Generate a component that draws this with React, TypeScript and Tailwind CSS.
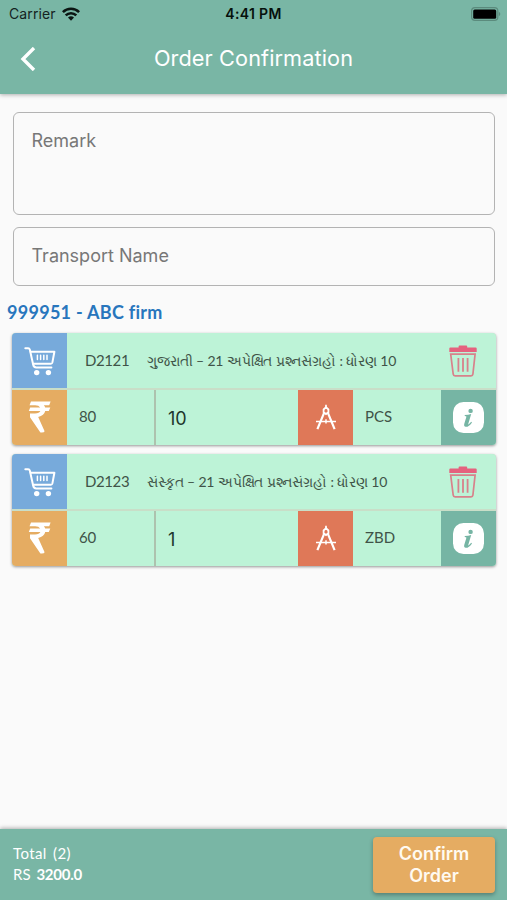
import React from 'react';

const ORDER_ITEMS = [
  {
    code: 'D2121',
    subject: 'ગુજરાતી',
    price: 80,
    quantity: 10,
    unit: 'PCS'
  },
  {
    code: 'D2123',
    subject: 'સંસ્કૃત',
    price: 60,
    quantity: 1,
    unit: 'ZBD'
  }
];

type OrderItem = (typeof ORDER_ITEMS)[number];

function WifiIcon() {
  return (
    <svg className="w-[18px] h-[14px]" viewBox="0 0 18 14" fill="none" stroke="#0b1512" strokeWidth="2.6">
      <path d="M0.9 5.1a11.6 11.6 0 0 1 16.2 0" />
      <path d="M3.7 8.4a7.6 7.6 0 0 1 10.6 0" />
      <path d="M6 10.6a4.4 4.4 0 0 1 6 0L9 13.7z" fill="#0b1512" stroke="none" />
    </svg>
  );
}

function BatteryIcon() {
  return (
    <svg className="w-[30px] h-[14px]" viewBox="0 0 30 14">
      <rect x="0.6" y="0.6" width="26.2" height="12.8" rx="3.4" fill="none" stroke="#5b8b7d" strokeWidth="1.2" />
      <rect x="2.2" y="2.4" width="23" height="9.4" rx="1.5" fill="#000" />
      <path d="M27.8 4.8c2 0.8 2 3.6 0 4.4z" fill="#5b8b7d" />
    </svg>
  );
}

function CartIcon() {
  return (
    <svg className="w-8 h-[30px]" viewBox="0 0 32 30" fill="none" stroke="#fff" strokeWidth="2" strokeLinecap="round" strokeLinejoin="round">
      <path d="M1.3 2.2H4.2Q5.4 2.2 5.8 3.5L9.2 18.8Q9.7 21.4 12.2 21.4H27.4" />
      <path d="M6.6 5.8H30.4L28.4 16.4Q28.1 17.7 26.9 17.7H9.3" />
      <path d="M13.4 9.2V13.6M16.6 9.2V13.6M19.8 9.2V13.6M23 9.2V13.6" strokeWidth="1.5" />
      <circle cx="12.7" cy="26.6" r="2.7" fill="#fff" stroke="none" />
      <circle cx="24.4" cy="26.6" r="2.7" fill="#fff" stroke="none" />
    </svg>
  );
}

function RupeeIcon() {
  return (
    <svg className="w-[23px] h-[32px]" viewBox="0 0 23 32" fill="#fff">
      <path d="M3 0.5H22.6L21.2 4.2H15.8Q16.8 5.2 17.2 6.4H22.3L20.8 10.1H17.2Q16.2 14.8 10.2 16L16.6 30.2Q16.2 31.8 12.4 31.4L2 16.2V12.4H6.6Q11.4 12.5 12.4 10.1H0.8L2.2 6.4H12.2Q10.8 4.2 7.2 4.2H1.5Z" />
    </svg>
  );
}

function CompassIcon() {
  return (
    <svg className="w-5 h-[27px]" viewBox="0 0 20 27" fill="none" stroke="#fff">
      <path d="M10 0.8V4" strokeWidth="1.7" />
      <path d="M10 3.2L12.4 5.5V8.2L10 10L7.6 8.2V5.5Z" strokeWidth="1.8" />
      <path d="M8.2 8.6L1.4 25.2M11.8 8.6L18.6 25.2" strokeWidth="2.2" />
      <path d="M0 17.5H20" strokeWidth="1.7" />
      <path d="M10 15.3V19.5" strokeWidth="1.5" />
    </svg>
  );
}

function TrashIcon() {
  return (
    <svg className="w-7 h-8" viewBox="0 0 28 32" fill="none">
      <path d="M0.3 6V3.6Q0.3 2.5 1.4 2.5H9.6V1.4Q9.6 0.5 10.5 0.5H17.3Q18.2 0.5 18.2 1.4V2.5H26.6Q27.7 2.5 27.7 3.6V7H0.3Z" fill="#e5627e" />
      <path d="M1.7 9.2H26.1L23.9 29.2Q23.7 30.9 22 30.9H6.1Q4.4 30.9 4.2 29.2Z" stroke="#d8818b" strokeWidth="1.7" />
      <path d="M9.4 13V26.8M14 13V26.8M18.6 13V26.8" stroke="#d8818b" strokeWidth="1.8" />
    </svg>
  );
}

function InfoIcon() {
  return (
    <svg className="w-[31px] h-[31px]" viewBox="0 0 31 31">
      <rect width="31" height="31" rx="10.5" fill="#fff" />
      <circle cx="17.6" cy="8.9" r="2.2" fill="#76b5a4" />
      <path d="M11.8 13.1Q15.2 13 18.2 12L15.1 22.4Q15.6 22.8 18.2 19.8L19 20.4Q15.8 25 12.7 24.8Q10.5 24.5 11.3 21.8L13.4 14.8Q13.5 14.1 11.7 14.1Z" fill="#76b5a4" />
    </svg>
  );
}

function OrderCard({ item }: { item: OrderItem }) {
  return (
    <article className="flex h-[111.5px] flex-col gap-[1.5px] overflow-hidden rounded bg-[#c9dec8] font-['Lato','Noto_Sans',sans-serif] text-[#405348] shadow-[0_1px_3px_rgba(0,0,0,0.4)]">
      <div className="flex h-[55px] bg-[#bdf3d7]">
        <div className="flex w-[55px] items-center justify-center bg-[#77aadb]">
          <CartIcon />
        </div>
        <div className="flex w-[80px] items-center pl-[18px] text-[15px] tracking-[-0.4px]">{item.code}</div>
        <div className="flex flex-1 items-center whitespace-nowrap text-[14px] tracking-[-0.13px]">
          {item.subject} – 21 અપેક્ષિત પ્રશ્નસંગ્રહો : ધોરણ 10
        </div>
        <button className="flex w-[67px] items-center justify-center">
          <TrashIcon />
        </button>
      </div>
      <div className="flex h-[55px] bg-[#bdf3d7]">
        <div className="flex w-[55px] items-center justify-center bg-[#e5ac62]">
          <RupeeIcon />
        </div>
        <div className="flex w-[89px] items-center border-r-2 border-[#adc2ae] pb-0.5 pl-3 text-[15px] tracking-[-0.3px]">{item.price}</div>
        <div className="flex w-[142px] items-center pl-3 pt-0.5 font-['Inter',sans-serif] text-[18px] text-[#20372b]">
          {item.quantity}
        </div>
        <div className="flex w-[55px] items-center justify-center bg-[#df7858]">
          <CompassIcon />
        </div>
        <div className="flex flex-1 items-center pb-0.5 pl-3 text-[15px]">{item.unit}</div>
        <button className="flex w-[55px] items-center justify-center bg-[#76b5a4]">
          <InfoIcon />
        </button>
      </div>
    </article>
  );
}

export default function App() {
  return (
    <div className="flex h-[900px] w-[507px] flex-col overflow-hidden bg-[#fafafa] font-['Inter',sans-serif]">
      <header className="z-10 h-[94px] shrink-0 bg-[#79b6a5] shadow-[0_1px_4px_rgba(0,0,0,0.3)]">
        <div className="grid h-[27px] grid-cols-3 items-center pl-[6px] pr-[6px] text-[14px] text-[#14231f]">
          <div className="flex items-center gap-1.5 pl-[3px]">
            <span className="tracking-[0.1px]">Carrier</span>
            <WifiIcon />
          </div>
          <div className="text-center text-[14px] font-semibold tracking-[0.35px] text-[#06100c]">4:41 PM</div>
          <div className="flex justify-end">
            <BatteryIcon />
          </div>
        </div>
        <div className="grid h-[64px] grid-cols-[60px_1fr_60px] items-center text-white">
          <button className="pl-5">
            <svg className="h-6 w-4" viewBox="0 0 16 24" fill="none" stroke="currentColor" strokeWidth="3.4">
              <path d="M14 1L3 12L14 23" />
            </svg>
          </button>
          <h1 className="pb-0.5 text-center text-[21.7px] tracking-[0.1px]">Order Confirmation</h1>
        </div>
      </header>

      <main className="flex-1 pl-3 pr-[11px] pt-[18px]">
        <div className="mx-px h-[103px] rounded-md border-[1.5px] border-[#b3b3b3] px-[17.5px] pt-[15px] text-[18px] leading-[26px] text-[#777]">
          Remark
        </div>
        <div className="mx-px mt-3 flex h-[59px] items-center rounded-md border-[1.5px] border-[#b3b3b3] px-[17.5px] pb-0.5 text-[18px] text-[#777]">
          Transport Name
        </div>
        <h2 className="-ml-[5px] mt-[13px] h-[34px] font-['Lato',sans-serif] text-[18px] font-bold leading-[26px] tracking-[0.28px] text-[#2876bd]">
          999951 - ABC firm
        </h2>
        <div className="flex flex-col gap-[9.5px]">
          {ORDER_ITEMS.map((item) => (
            <OrderCard key={item.code} item={item} />
          ))}
        </div>
      </main>

      <footer className="flex h-[71px] shrink-0 items-center justify-between bg-[#79b6a5] pl-[13px] pr-3 text-white shadow-[0_-1px_4px_rgba(0,0,0,0.3)]">
        <div className="pb-px font-['Lato',sans-serif] text-[15px] leading-[21px]">
          <p className="tracking-[0.4px] [word-spacing:2px]">Total (2)</p>
          <p>
            RS <strong className="ml-0.5 tracking-[-0.25px]">3200.0</strong>
          </p>
        </div>
        <button className="h-14 w-[122px] rounded bg-[#e5ac62] px-4 text-[18px] font-semibold leading-[22px] text-[#fffaf1] shadow-[0_2px_4px_rgba(0,0,0,0.3)]">
          Confirm Order
        </button>
      </footer>
    </div>
  );
}
